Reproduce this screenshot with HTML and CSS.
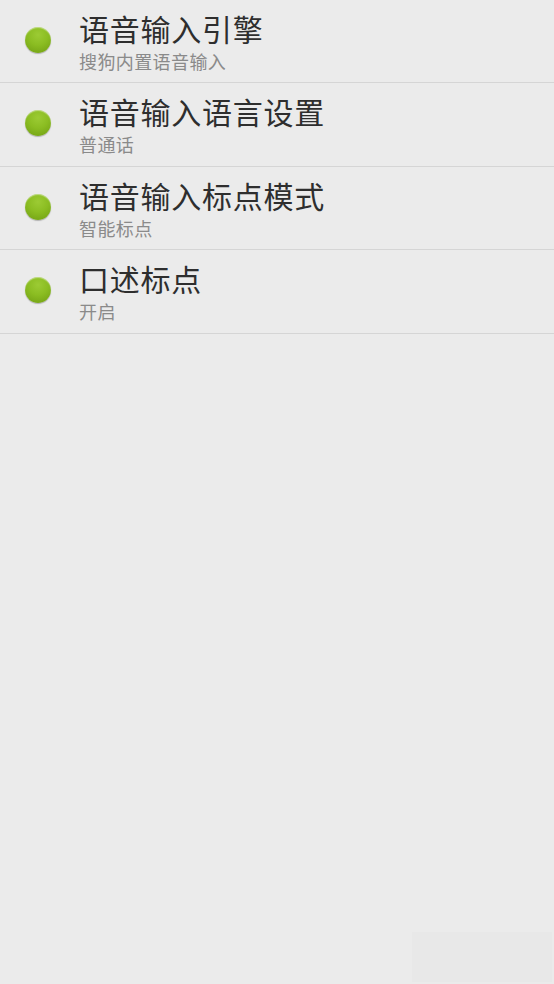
FILE: index.html
```html
<!DOCTYPE html>
<html lang="zh-CN">
<head>
<meta charset="utf-8">
<title>语音设置</title>
<link rel="stylesheet" href="styles.css">
</head>
<body>
<ul class="list">
  <li class="row">
    <span class="dot"></span>
    <div class="texts">
      <div class="title">语音输入引擎</div>
      <div class="sub">搜狗内置语音输入</div>
    </div>
  </li>
  <li class="row">
    <span class="dot"></span>
    <div class="texts">
      <div class="title">语音输入语言设置</div>
      <div class="sub">普通话</div>
    </div>
  </li>
  <li class="row">
    <span class="dot"></span>
    <div class="texts">
      <div class="title">语音输入标点模式</div>
      <div class="sub">智能标点</div>
    </div>
  </li>
  <li class="row">
    <span class="dot"></span>
    <div class="texts">
      <div class="title">口述标点</div>
      <div class="sub">开启</div>
    </div>
  </li>
</ul>
<div class="ghost"></div>
</body>
</html>
```

FILE: styles.css
```css
html, body {
  margin: 0;
  padding: 0;
  height: 100%;
}
body {
  background: #ebebeb;
  font-family: "Noto Sans CJK SC", "Noto Sans", sans-serif;
  overflow: hidden;
  position: relative;
}
.list {
  list-style: none;
  margin: 0;
  padding: 0;
}
.row {
  box-sizing: border-box;
  height: 83.4px;
  border-bottom: 1px solid #d5d5d5;
  display: flex;
  align-items: flex-start;
}
.dot {
  flex: none;
  width: 26px;
  height: 26px;
  margin: 27px 0 0 25px;
  border-radius: 50%;
  background: radial-gradient(circle at 50% 30%, #9ccb34 0%, #8bbd22 45%, #6f9d12 100%);
  box-shadow: 0 1px 1px rgba(0,0,0,0.25), inset 0 1px 1px rgba(255,255,255,0.45);
}
.texts {
  margin-left: 28px;
  display: flex;
  flex-direction: column;
}
.title {
  font-size: 30px;
  line-height: 30px;
  color: #2e2e2e;
  margin-top: 13px;
  letter-spacing: 0.75px;
}
.sub {
  font-size: 18px;
  line-height: 18px;
  color: #8a8a8a;
  margin-top: 9px;
  letter-spacing: 0.4px;
}
.ghost {
  position: absolute;
  left: 412px;
  top: 932px;
  width: 140px;
  height: 50px;
  background: #e8e8e8;
}
```
